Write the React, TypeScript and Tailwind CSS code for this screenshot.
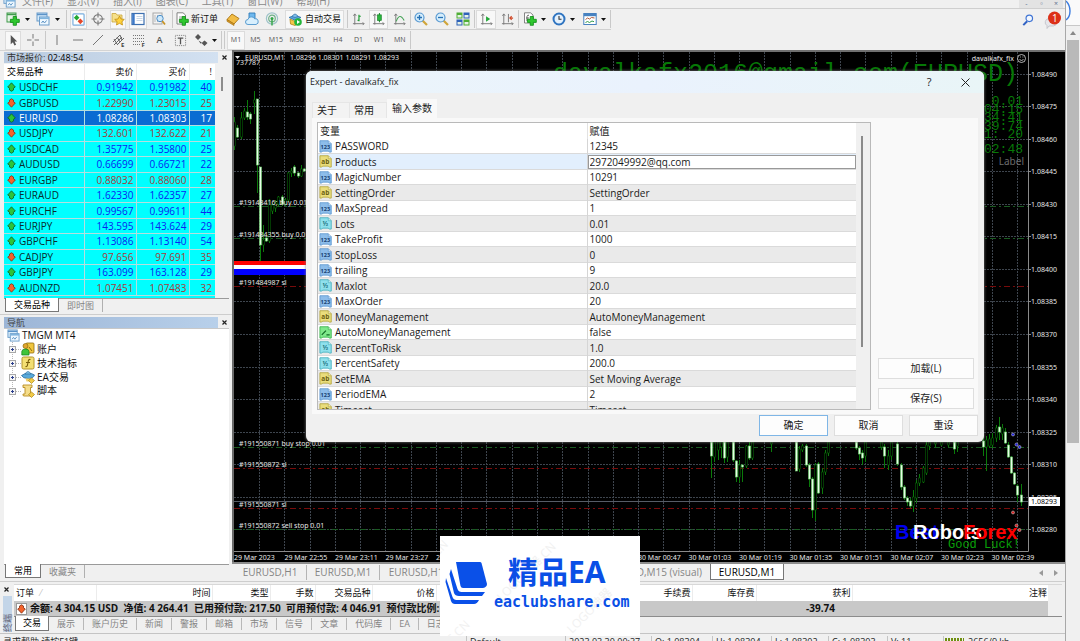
import React, { useState } from 'react';
import clsx from 'clsx';

type Quote = [symbol: string, bid: string, ask: string, spread: number, up: boolean];
type ParamKind = 'int' | 'str' | 'dbl' | 'bool';
type Param = [kind: ParamKind, name: string, value: string];
// x, high, low, body top, body bottom, filled
type Candle = [number, number, number, number, number, 0 | 1];

const MENUS = ['文件(F)', '显示(V)', '插入(I)', '图表(C)', '工具(T)', '窗口(W)', '帮助(H)'];

const QUOTES: Quote[] = [
  ['USDCHF', '0.91942', '0.91982', 40, true],
  ['GBPUSD', '1.22990', '1.23015', 25, false],
  ['EURUSD', '1.08286', '1.08303', 17, true],
  ['USDJPY', '132.601', '132.622', 21, false],
  ['USDCAD', '1.35775', '1.35800', 25, true],
  ['AUDUSD', '0.66699', '0.66721', 22, true],
  ['EURGBP', '0.88032', '0.88060', 28, false],
  ['EURAUD', '1.62330', '1.62357', 27, true],
  ['EURCHF', '0.99567', '0.99611', 44, true],
  ['EURJPY', '143.595', '143.624', 29, true],
  ['GBPCHF', '1.13086', '1.13140', 54, true],
  ['CADJPY', '97.656', '97.691', 35, false],
  ['GBPJPY', '163.099', '163.128', 29, true],
  ['AUDNZD', '1.07451', '1.07483', 32, false],
];

const PARAMS: Param[] = [
  ['int', 'PASSWORD', '12345'],
  ['str', 'Products', '2972049992@qq.com'],
  ['int', 'MagicNumber', '10291'],
  ['str', 'SettingOrder', 'SettingOrder'],
  ['int', 'MaxSpread', '1'],
  ['dbl', 'Lots', '0.01'],
  ['int', 'TakeProfit', '1000'],
  ['int', 'StopLoss', '0'],
  ['int', 'trailing', '9'],
  ['dbl', 'Maxlot', '20.0'],
  ['int', 'MaxOrder', '20'],
  ['str', 'MoneyManagement', 'AutoMoneyManagement'],
  ['bool', 'AutoMoneyManagement', 'false'],
  ['dbl', 'PercentToRisk', '1.0'],
  ['dbl', 'PercentSafety', '200.0'],
  ['str', 'SetEMA', 'Set Moving Average'],
  ['int', 'PeriodEMA', '2'],
  ['str', 'Timeset', 'Timeset'],
];

const CANDLES: Candle[] = [
  [234, 117, 150, 122, 146, 0],
  [237, 125, 138, 128, 137, 1],
  [241, 112, 139, 118, 137, 0],
  [244, 108, 120, 111, 118, 0],
  [247, 100, 120, 112, 117, 1],
  [250, 112, 124, 114, 119, 1],
  [254, 91, 114, 100, 103, 0],
  [257, 99, 193, 99, 165, 1],
  [260, 167, 261, 167, 245, 1],
  [263, 225, 252, 240, 245, 0],
  [266, 236, 242, 238, 241, 1],
  [269, 199, 243, 200, 241, 0],
  [272, 203, 214, 205, 211, 0],
  [275, 200, 212, 203, 208, 0],
  [278, 196, 206, 197, 204, 0],
  [282, 195, 206, 197, 204, 1],
  [285, 198, 206, 200, 204, 0],
  [288, 172, 202, 173, 200, 0],
  [291, 168, 177, 171, 173, 0],
  [294, 165, 176, 167, 173, 1],
  [298, 172, 178, 173, 176, 1],
  [301, 165, 177, 169, 176, 0],
  [304, 168, 172, 169, 171, 1],
  [711, 442, 478, 442, 456, 1],
  [714, 442, 462, 442, 457, 0],
  [718, 442, 460, 442, 450, 0],
  [721, 442, 458, 442, 447, 0],
  [724, 442, 463, 442, 458, 1],
  [727, 442, 462, 442, 457, 0],
  [733, 442, 462, 442, 460, 1],
  [736, 460, 482, 461, 477, 1],
  [739, 460, 483, 465, 477, 0],
  [742, 464, 482, 465, 467, 1],
  [746, 445, 468, 446, 466, 0],
  [749, 442, 460, 446, 458, 1],
  [752, 442, 460, 442, 458, 0],
  [771, 442, 452, 442, 444, 0],
  [796, 442, 471, 442, 471, 1],
  [799, 446, 472, 449, 469, 0],
  [802, 444, 452, 446, 450, 0],
  [806, 444, 467, 446, 465, 1],
  [809, 463, 487, 465, 479, 1],
  [812, 477, 518, 479, 510, 1],
  [815, 463, 521, 465, 510, 0],
  [818, 462, 494, 464, 493, 1],
  [822, 468, 494, 472, 488, 0],
  [825, 450, 475, 453, 472, 0],
  [828, 442, 456, 442, 453, 0],
  [856, 442, 450, 442, 448, 1],
  [859, 446, 460, 448, 454, 1],
  [862, 450, 465, 453, 458, 1],
  [865, 442, 462, 442, 456, 0],
  [881, 442, 450, 442, 447, 0],
  [884, 444, 468, 447, 456, 1],
  [888, 450, 470, 456, 465, 0],
  [891, 442, 460, 442, 456, 0],
  [897, 442, 466, 444, 464, 1],
  [901, 463, 490, 465, 487, 1],
  [904, 485, 500, 487, 498, 1],
  [907, 496, 506, 498, 502, 1],
  [910, 498, 508, 501, 506, 1],
  [913, 490, 512, 497, 506, 0],
  [916, 480, 503, 483, 498, 0],
  [919, 474, 486, 478, 483, 0],
  [923, 466, 483, 468, 482, 0],
  [926, 442, 475, 445, 473, 0],
  [929, 442, 450, 442, 446, 0],
  [935, 442, 447, 442, 444, 0],
  [941, 442, 446, 442, 445, 0],
  [948, 442, 447, 442, 445, 0],
  [954, 442, 454, 442, 449, 1],
  [957, 442, 452, 442, 446, 0],
  [983, 436, 456, 441, 447, 1],
  [986, 436, 471, 440, 447, 0],
  [989, 434, 448, 439, 446, 0],
  [992, 433, 448, 438, 445, 0],
  [996, 425, 442, 428, 438, 0],
  [999, 417, 440, 427, 432, 1],
  [1002, 424, 440, 428, 434, 0],
  [1005, 428, 444, 432, 443, 1],
  [1008, 442, 458, 445, 457, 1],
  [1011, 456, 474, 457, 473, 1],
  [1014, 472, 485, 473, 484, 1],
  [1017, 484, 502, 486, 495, 1],
  [1021, 484, 506, 495, 502, 1],
];

const TIMES = [
  '29 Mar 2023', '29 Mar 22:55', '29 Mar 23:11', '29 Mar 23:27', '29 Mar 23:43', '29 Mar 23:59',
  '30 Mar 00:15', '30 Mar 00:31', '30 Mar 00:47', '30 Mar 01:03', '30 Mar 01:19', '30 Mar 01:35',
  '30 Mar 01:51', '30 Mar 02:07', '30 Mar 02:23', '30 Mar 02:39',
];

const ORDER_LABELS: [string, number][] = [
  ['#19148416; buy 0.01', 205],
  ['#191484355 buy 0.01', 237],
  ['#191484987 sl', 285],
  ['#191550871 buy stop 0.01', 446],
  ['#191550872 sl', 467],
  ['#191550871 sl', 507],
  ['#191550872 sell stop 0.01', 528],
];

/* ---------- small parts ---------- */

const Svg = ({ children, size = 14 }: { children: React.ReactNode; size?: number }) => (
  <svg width={size} height={size} viewBox="0 0 14 14" className="shrink-0" aria-hidden="true">
    {children}
  </svg>
);

function Tool({ label, cls, on, children }: { label: string; cls: string; on?: boolean; children: React.ReactNode }) {
  return (
    <button
      aria-label={label}
      className={clsx('h-[19px] shrink-0 flex items-center justify-center', cls, on && 'bg-[#f8f8f8] border border-[#dcdcdc]')}
    >
      {children}
    </button>
  );
}

const Caret = ({ cls }: { cls: string }) => (
  <button aria-label="更多" className={clsx('shrink-0 flex items-center justify-center', cls)}>
    <svg width="5" height="3" viewBox="0 0 5 3"><path d="M0 0h5L2.5 3z" fill="#111" /></svg>
  </button>
);

const Sep = ({ cls = '' }: { cls?: string }) => <span className={clsx('w-px h-[18px] bg-[#c9c9c9] shrink-0', cls)} />;

const Plus = ({ x = 4, y = 4 }: { x?: number; y?: number }) => (
  <path
    transform={`translate(${x} ${y})`}
    d="M3.2 0.5h3.2v2.8h2.9v3.1H6.4v2.9H3.2V6.4H.4V3.3h2.8z"
    fill="#2fc72f"
    stroke="#0c8a14"
    strokeWidth=".8"
  />
);

const Axes = () => (
  <path d="M3 1v11.500M1 11.500h12M1.500 3L3 1l1.500 2M11.500 10l1.500 1.500-1.500 1.500" fill="none" stroke="#777" strokeWidth="1" />
);

const Windows = ({ size }: { size?: number }) => (
  <Svg size={size}>
    <rect x="1" y="1" width="10" height="8" fill="#d8ecfb" stroke="#6a9cc9" />
    <path d="M1 2.500h10" stroke="#5b93c8" strokeWidth="1.500" />
    <rect x="3.500" y="5" width="9.500" height="8" fill="#eef8ff" stroke="#6a9cc9" />
    <path d="M3.500 6.200h9.500" stroke="#7fb4de" strokeWidth="1.800" />
    <path d="M5.500 11l1.500-2 1.500 2 2-2.500" stroke="#5b92c4" fill="none" />
  </Svg>
);

const Arrow = ({ up }: { up: boolean }) => (
  <svg width="9" height="10" viewBox="0 0 9 10" className="shrink-0" aria-hidden="true">
    {up ? (
      <path d="M4.500.8L8.300 5 6.500 6.200V8l-2 1.200L2.500 8V6.200L.7 5z" fill="#2cc43a" stroke="#0d6b2c" strokeWidth=".9" />
    ) : (
      <path d="M4.500 9.200L8.300 5 6.500 3.800V2l-2-1.200L2.500 2v1.800L.7 5z" fill="#f4642c" stroke="#8c3518" strokeWidth=".9" />
    )}
  </svg>
);

const Close = ({ label, cls = 'w-[12px]' }: { label: string; cls?: string }) => (
  <button aria-label={label} className={clsx('h-[11px] flex items-center justify-center shrink-0', cls)}>
    <svg width="5" height="5" viewBox="0 0 5 5"><path d="M.5.5l4 4M4.500.5l-4 4" stroke="#222" strokeWidth="1.200" /></svg>
  </button>
);

const KIND_STYLE: Record<ParamKind, [string, string, string]> = {
  int: ['#8dbdea', '#5f97d0', '#173f70'],
  str: ['#e9dd7c', '#b5a53c', '#6b5f10'],
  dbl: ['#8fe0ec', '#45aebd', '#1d7482'],
  bool: ['#7fe88a', '#37b24a', '#0f6a24'],
};

function ParamIcon({ kind }: { kind: ParamKind }) {
  const [fill, edge, ink] = KIND_STYLE[kind];
  return (
    <Svg size={13}>
      <path d="M1 .8h9L13.200 4v9H11l-1-1H4l-1 1H1z" fill={fill} stroke={edge} strokeWidth=".9" />
      <path d="M10 .8V4h3.200" fill="#ffffff88" stroke={edge} strokeWidth=".7" />
      {kind === 'bool' ? (
        <path d="M3 9.500L7.500 5M8 9.500h3.500" stroke={ink} strokeWidth="1.300" />
      ) : (
        <text x="6.800" y="9.800" textAnchor="middle" fontSize={kind === 'int' ? 6 : 7} fontWeight="700" fill={ink}>
          {kind === 'int' ? '123' : kind === 'str' ? 'ab' : '½'}
        </text>
      )}
    </Svg>
  );
}

/* ---------- top bars ---------- */

function MenuBar() {
  return (
    <nav className="h-[9px] shrink-0 flex items-end overflow-hidden border-b border-[#cfcfcf] text-[10px] leading-[14px] text-[#8a8a8a]">
      <span className="ml-[3px] mr-[6px] h-[14px] flex items-center"><Windows size={13} /></span>
      <div className="flex items-end gap-[14px]">
        {MENUS.map((m) => (
          <button key={m} className="whitespace-nowrap">{m}</button>
        ))}
      </div>
      <div className="ml-auto mr-[2px] flex h-[8px] bg-[#e3e3e3] text-[7px] leading-[8px] text-[#5c6f8c]">
        <button aria-label="最小化" className="w-[15px]">-</button>
        <button aria-label="还原" className="w-[15px]">▫</button>
        <button aria-label="关闭" className="w-[14px]">×</button>
      </div>
    </nav>
  );
}

function MainToolbar() {
  return (
    <div className="h-[21px] shrink-0 flex">
      <div className="flex items-center pl-[4px] border-b border-[#d0d0d0] text-[9px] text-[#111]">
        <Tool label="新图表" cls="w-[18px]">
          <Svg>
            <rect x="1" y="1" width="9" height="9" fill="#e6f4e6" stroke="#3f9a4a" />
            <path d="M1 2.500h9" stroke="#3f9a4a" strokeWidth="1.500" />
            <Plus />
          </Svg>
        </Tool>
        <Caret cls="w-[10px]" />
        <Tool label="配置文件" cls="w-[22px]"><Windows /></Tool>
        <Caret cls="w-[7px]" />
        <Sep cls="ml-[5px]" />
        <Tool label="市场报价" cls="ml-[3px] w-[17px]" on>
          <Svg size={13}>
            <rect x="1" y="1" width="12" height="12" rx="1" fill="#fff" stroke="#79aede" strokeWidth="1.300" />
            <path d="M5 2L8 5 5 8 2 5z" fill="#22a832" />
            <path d="M9 6l3 3-3 3-3-3z" fill="#e5482a" />
          </Svg>
        </Tool>
        <Tool label="数据窗口" cls="w-[21px]">
          <Svg>
            <circle cx="7" cy="7" r="4.300" fill="none" stroke="#777" strokeWidth="1.100" />
            <path d="M7 .5v5M7 8.500v5M.5 7h5M8.500 7h5" stroke="#777" strokeWidth="1.100" />
          </Svg>
        </Tool>
        <Tool label="导航" cls="ml-[2px] w-[16px]" on>
          <Svg>
            <path d="M1 3V1.500h4L6 3h5v7H1z" fill="#f6e08a" stroke="#c9a53a" strokeWidth=".8" />
            <path d="M8.500 4l1.500 3 3.300.4-2.400 2.200.6 3.400-3-1.700-3 1.700.6-3.400L3.700 7.400 7 7z" fill="#ffd23c" stroke="#c28d10" strokeWidth=".8" />
          </Svg>
        </Tool>
        <Tool label="终端" cls="ml-[3px] w-[18px]" on>
          <Svg>
            <rect x="1" y="1.500" width="12" height="11" fill="#fdfeff" stroke="#3c6fb0" strokeWidth="1.200" />
            <path d="M2.500 2v10" stroke="#3c78c8" strokeWidth="2.400" />
            <path d="M5.500 4.500h6M5.500 6.500h6M5.500 8.500h6" stroke="#c8d6e6" />
          </Svg>
        </Tool>
        <Tool label="策略测试" cls="ml-[2px] w-[20px]">
          <Svg>
            <rect x="1" y="1" width="9" height="11" fill="#f2f2f2" stroke="#a8a8a8" />
            <path d="M3 3v7M5.500 3v7" stroke="#b9b9b9" />
            <circle cx="8" cy="6.500" r="3.200" fill="#cfe9fa" stroke="#4a8dc8" />
            <path d="M10.300 9l2.700 3.500" stroke="#c79325" strokeWidth="1.800" />
          </Svg>
        </Tool>
        <Sep cls="ml-[3px]" />
        <button className="ml-[2px] w-[49px] h-[19px] shrink-0 flex items-center gap-[2px] whitespace-nowrap">
          <Svg>
            <path d="M2 .8h6L10.500 3v9H2z" fill="#fff" stroke="#777" strokeWidth=".9" />
            <path d="M4 5h4M4 7h4" stroke="#999" />
            <Plus x={4} y={4} />
          </Svg>
          新订单
        </button>
        <Tool label="MetaEditor" cls="w-[18px]">
          <Svg>
            <path d="M1 7.500L6 2l7 4.500-5 5.500z" fill="#f2bd46" stroke="#a97412" strokeWidth=".9" />
            <path d="M1 7.500v1.800L8 13.500V12z" fill="#d89a24" stroke="#a97412" strokeWidth=".7" />
          </Svg>
        </Tool>
        <Tool label="市场" cls="w-[20px]">
          <Svg>
            <path d="M4 1h6v6H4z" fill="#6fb8ee" stroke="#2f7ab8" strokeWidth=".9" />
            <path d="M3 12.500a2.500 2.500 0 010-5 3.500 3.500 0 016.500-.8 2.800 2.800 0 011.500 5.800z" fill="#d8effd" stroke="#4d94cc" strokeWidth=".9" />
          </Svg>
        </Tool>
        <Tool label="信号" cls="w-[20px]">
          <Svg>
            <circle cx="7" cy="6.500" r="5.600" fill="none" stroke="#9fc3c9" strokeWidth="1.200" />
            <circle cx="7" cy="6.500" r="3.300" fill="none" stroke="#6fb088" strokeWidth="1.200" />
            <circle cx="7" cy="6.500" r="1.500" fill="#2fa545" />
            <path d="M7 7v6.500" stroke="#2fa545" strokeWidth="1.400" />
          </Svg>
        </Tool>
        <button className="ml-[3px] w-[59px] h-[19px] shrink-0 flex items-center gap-[3px] pl-[2px] bg-[#f8f8f8] border border-[#dcdcdc] whitespace-nowrap">
          <Svg>
            <path d="M1 5.500l6-2.500 6 2.500-6 2.700z" fill="#5ba7dc" stroke="#2f6fa6" strokeWidth=".8" />
            <path d="M4 4.500Q7-.5 10 4.500L7 5.500z" fill="#7fc0ec" stroke="#2f6fa6" strokeWidth=".7" />
            <path d="M2 7l5 2.500L11 7.500v3.500l-4 2.500L2.500 12z" fill="#f3c64a" stroke="#b48716" strokeWidth=".8" />
            <circle cx="10" cy="10" r="3.800" fill="#23b53a" />
            <path d="M9 8v4l3-2z" fill="#fff" />
          </Svg>
          自动交易
        </button>
        <Sep cls="ml-[3px]" />
        <Tool label="柱状图" cls="w-[20px]">
          <Svg size={13}><Axes /><path d="M7.500 2v7M6 8h1.500M7.500 3.500H9.500" stroke="#1d9c33" strokeWidth="1.300" /></Svg>
        </Tool>
        <Tool label="K线图" cls="ml-[1px] w-[19px]" on>
          <Svg size={13}><Axes /><path d="M8 0v10" stroke="#0d7d20" /><rect x="6" y="2" width="4" height="6" fill="#29b53c" stroke="#0d7d20" strokeWidth=".7" /></Svg>
        </Tool>
        <Tool label="折线图" cls="w-[22px]">
          <Svg size={13}><Axes /><path d="M3.500 9Q7-1 12 8" fill="none" stroke="#45a357" strokeWidth="1.200" /></Svg>
        </Tool>
        <Sep />
        {['放大', '缩小'].map((t, i) => (
          <Tool key={t} label={t} cls={i ? 'w-[22px]' : 'w-[20px]'}>
            <Svg>
              <path d="M8.500 8.500L13 13" stroke="#d0a53a" strokeWidth="2.200" />
              <circle cx="5.500" cy="5.500" r="4.500" fill="#d6eefc" stroke="#5a9ad2" strokeWidth="1.200" />
              <path d={i ? 'M3 5.500h5' : 'M3 5.500h5M5.500 3v5'} stroke="#2671b5" strokeWidth="1.300" />
            </Svg>
          </Tool>
        ))}
        <Tool label="平铺窗口" cls="w-[19px]">
          <Svg>
            <path d="M.5.5h6v6h-6zM7.500 7.500h6v6h-6z" fill="#4fae35" />
            <path d="M7.500.5h6v6h-6zM.5 7.500h6v6h-6z" fill="#2f62b8" />
            <path d="M1.500 3h4v2.500h-4zM8.500 3h4v2.500h-4zM1.500 10h4v2.500h-4zM8.500 10h4v2.500h-4z" fill="#e6f2e6" />
          </Svg>
        </Tool>
        <Sep cls="ml-[2px]" />
        <Tool label="自动滚动" cls="ml-[1px] w-[20px]" on>
          <Svg size={13}><Axes /><path d="M6.500 3.500v6l4.500-3z" fill="#23a838" /></Svg>
        </Tool>
        <Tool label="图表平移" cls="w-[22px]">
          <Svg size={13}><Axes /><path d="M8 1v9" stroke="#777" /><path d="M13 5.500H9.500M11.500 3.500l-2 2 2 2" fill="none" stroke="#d04a2a" strokeWidth="1.200" /></Svg>
        </Tool>
        <Sep />
        <Tool label="指标列表" cls="ml-[1px] w-[20px]">
          <Svg>
            <path d="M1.500.8h6L10 3v8H1.500z" fill="#fff" stroke="#777" strokeWidth=".9" />
            <path d="M4 9V4.500Q4 3 6 3.200M3 6h3" fill="none" stroke="#666" />
            <Plus />
          </Svg>
        </Tool>
        <Caret cls="w-[7px]" />
        <Tool label="时段" cls="ml-[2px] w-[20px]">
          <Svg>
            <circle cx="7" cy="7" r="5.500" fill="#e4f1fd" stroke="#2f74c0" strokeWidth="2" />
            <path d="M7 4v3.300h2.500" fill="none" stroke="#333" strokeWidth="1.100" />
          </Svg>
        </Tool>
        <Caret cls="w-[7px]" />
        <Tool label="模板" cls="ml-[4px] w-[20px]">
          <Svg>
            <rect x=".8" y="1.500" width="12.400" height="11" fill="#fff" stroke="#4782c0" />
            <path d="M.8 3h12.400" stroke="#4782c0" strokeWidth="2.400" />
            <path d="M2.500 7.500l2-1.500 2 1 2-1.500 3 .5" fill="none" stroke="#b05a3a" />
            <path d="M2.500 10.500l2-1 2 1 2.500-1.500 2 .7" fill="none" stroke="#2f9a4a" />
          </Svg>
        </Tool>
        <Caret cls="w-[7px]" />
        <Sep cls="ml-[3px]" />
      </div>
      <div className="ml-auto flex items-center gap-[10px] pr-[3px]">
        <button aria-label="搜索">
          <Svg size={12}>
            <path d="M6 8.500L1.500 13" stroke="#3263c4" strokeWidth="2.400" />
            <circle cx="8.500" cy="5" r="3.800" fill="#f1f7ff" stroke="#3f74d4" strokeWidth="1.400" />
          </Svg>
        </button>
        <button aria-label="通知" className="relative w-[18px] h-[18px]">
          <svg width="18" height="18" viewBox="0 0 18 18">
            <path d="M4.500 7.500h5a4 3.800 0 010 7.500H5L3 17.500v-2.900a3.800 3.800 0 011.500-7z" fill="#e6e6ea" stroke="#bcbcc4" strokeWidth=".8" />
            <circle cx="10.500" cy="7" r="6.500" fill="#dc3018" />
          </svg>
          <span className="absolute left-[8px] top-px text-[10px] leading-[12px] text-white">1</span>
        </button>
      </div>
    </div>
  );
}

function LineToolbar() {
  const [tf, setTf] = useState('M1');
  const line = (label: string, cls: string, d: string) => (
    <Tool label={label} cls={cls}><Svg><path d={d} fill="none" stroke="#777" strokeWidth="1" /></Svg></Tool>
  );
  return (
    <div className="h-[20px] shrink-0 flex items-center pl-[5px] text-[7px] text-[#555]">
      <Tool label="光标" cls="w-[16px]" on>
        <Svg size={13}><path d="M4 1v10l2.400-2.200L8 12.500l1.800-.8-1.600-3.500H11z" fill="#555" /></Svg>
      </Tool>
      {line('十字准线', 'w-[24px]', 'M7 1v4.500M7 8.500V13M1 7h4.500M8.500 7H13')}
      <Sep />
      {line('垂直线', 'w-[22px]', 'M7 2v10')}
      {line('水平线', 'w-[20px]', 'M2 7h10')}
      {line('趋势线', 'w-[20px]', 'M2 12L12 2')}
      <Tool label="等距通道" cls="w-[21px]">
        <Svg>
          <path d="M1 9L8 2M2 12l8-8M5 12l7-7M2 6l3 5M5 4l3 5M8 2l2 5" stroke="#666" fill="none" />
          <text x="9" y="14" fontSize="6" fontWeight="700" fill="#444">E</text>
        </Svg>
      </Tool>
      <Tool label="斐波纳契" cls="w-[20px]">
        <Svg>
          <path d="M1 2.500h12M1 5.500h12M1 8.500h12M1 11.500h7" stroke="#777" strokeDasharray="1 1" />
          <text x="9.500" y="14" fontSize="6" fontWeight="700" fill="#444">F</text>
        </Svg>
      </Tool>
      <button className="w-[21px] text-[9px] font-semibold">A</button>
      <Tool label="文字标签" cls="w-[21px]">
        <Svg size={13}>
          <rect x="1.500" y="1.500" width="11" height="11" fill="none" stroke="#777" strokeDasharray="1 1" />
          <path d="M4 4.500h6M7 4.500V11" stroke="#555" strokeWidth="1.400" />
        </Svg>
      </Tool>
      <Tool label="箭头" cls="w-[20px]">
        <Svg><path d="M4 1l3 3-3 3-3-3zM10.500 7.500l3 2.500-3 3-3-3zM4.500 7.500l2 3 2-.5" fill="#555" /></Svg>
      </Tool>
      <Caret cls="w-[6px]" />
      <Sep cls="ml-[4px]" />
      <Sep cls="ml-[2px] mr-[2px]" />
      <button
        onClick={() => setTf('M1')}
        className={clsx('w-[18px] h-[19px]', tf === 'M1' && 'bg-[#f8f8f8] border border-[#dcdcdc]')}
      >
        M1
      </button>
      <div className="flex w-[165px]">
        {['M5', 'M15', 'M30', 'H1', 'H4', 'D1', 'W1', 'MN'].map((t) => (
          <button key={t} onClick={() => setTf(t)} className={clsx('flex-1 h-[19px]', tf === t && 'bg-[#f8f8f8]')}>{t}</button>
        ))}
      </div>
      <Sep />
    </div>
  );
}

/* ---------- left column ---------- */

function PanelTitle({ children, cls }: { children: React.ReactNode; cls: string }) {
  return (
    <div className="flex items-center h-[11px] pl-[4px] pr-[2px]">
      <h2 className={clsx('flex-1 h-[11px] pl-[3px] text-[9px] leading-[11px]', cls)}>{children}</h2>
      <Close label="关闭面板" />
    </div>
  );
}

function PanelTabs({ active, other }: { active: string; other: string }) {
  return (
    <div className="flex items-start ml-[4px] mr-[3px] border-t border-[#9a9a9a] text-[9px] leading-[13px]">
      <button className="-mt-px ml-px px-[8px] bg-white border border-t-0 border-[#777] text-black">{active}</button>
      <button className="px-[8px] text-[#858585] border-r border-[#b0b0b0]">{other}</button>
    </div>
  );
}

function MarketWatch() {
  return (
    <section className="pt-px">
      <PanelTitle cls="bg-linear-to-r from-[#b9cbe0] to-[#d3e1f1] text-[#333]">
        市场报价: <span className="text-black">02:48:54</span>
      </PanelTitle>
      <div className="flex ml-[4px] mt-px h-[234px] overflow-hidden bg-[#f0f0f0]">
        <div className="w-[211px] bg-[#00ffff]">
          <table className="w-full h-[232px] table-fixed border-collapse text-[10px] leading-[14px]">
            <colgroup><col /><col className="w-[52px]" /><col className="w-[53px]" /><col className="w-[26px]" /></colgroup>
            <thead>
              <tr className="h-[16px] bg-white text-[9px]">
                <th className="p-0 pl-[3px] font-normal text-left border-r border-[#ececec]">交易品种</th>
                <th className="p-0 pr-[2px] font-normal text-right border-r border-[#ececec]">卖价</th>
                <th className="p-0 pr-[2px] font-normal text-right border-r border-[#ececec]">买价</th>
                <th className="p-0 pr-[3px] font-normal text-right">!</th>
              </tr>
            </thead>
            <tbody>
              {QUOTES.map(([sym, bid, ask, spread, up]) => {
                const sel = sym === 'EURUSD';
                return (
                  <tr
                    key={sym}
                    className={clsx(
                      'border-b border-[#b5dede] text-right',
                      sel ? 'bg-[#0a6cd2] text-white' : up ? 'text-[#0a24f0]' : 'text-[#a83a3a]',
                    )}
                  >
                    <td className="p-0 pl-[3px] border-r border-[#b5dede]">
                      <span className={clsx('flex items-center gap-[3px]', sel ? 'text-white' : 'text-[#0a2c2c]')}>
                        <Arrow up={up} />
                        {sym}
                      </span>
                    </td>
                    <td className="p-0 pr-[2px] border-r border-[#b5dede]">{bid}</td>
                    <td className="p-0 pr-[2px] border-r border-[#b5dede]">{ask}</td>
                    <td className="p-0 pr-[3px]">{spread}</td>
                  </tr>
                );
              })}
            </tbody>
          </table>
        </div>
        <div className="flex-1 pt-[13px] pl-[6px]"><div className="w-[2px] h-[14px] bg-[#8c8c8c]" /></div>
      </div>
      <PanelTabs active="交易品种" other="即时图" />
    </section>
  );
}

const TREE: [string, React.ReactNode][] = [
  ['账户', (
    <>
      <rect x="5" y="1" width="8" height="10" rx="1" fill="#f0c63e" stroke="#8f6d10" strokeWidth=".8" />
      <circle cx="4.500" cy="4" r="2.500" fill="#e0a52c" stroke="#8f6d10" strokeWidth=".7" />
      <path d="M.8 13V9.500Q1 7 4.500 7T8 9.500V13z" fill="#3fc43a" stroke="#16821a" strokeWidth=".7" />
      <path d="M8 5l3 4" stroke="#8f6d10" />
    </>
  )],
  ['技术指标', (
    <>
      <rect x="1" y="1" width="12" height="12" rx="1.500" fill="#f3df73" stroke="#b3942a" />
      <path d="M9.500 3.500Q7.500 3 7.200 5.500L6.500 9Q6 11 4.500 10.500M5 6.500h4" fill="none" stroke="#7a5f0c" strokeWidth="1.100" />
    </>
  )],
  ['EA交易', (
    <>
      <path d="M.5 5.500Q7 1 13.500 5 12 9 7 8.500 2 8.500.5 5.500z" fill="#58a9da" stroke="#2b6d9e" strokeWidth=".8" />
      <path d="M4 4Q7-1 10 4z" fill="#82c4ea" stroke="#2b6d9e" strokeWidth=".7" />
      <path d="M4.500 8.500h5v3h-4z" fill="#f0cf6a" />
      <path d="M10.500 8L13.500 10.500 10.500 13.500 7.500 10.500z" fill="#f2cb46" stroke="#ab8418" strokeWidth=".7" />
    </>
  )],
  ['脚本', (
    <>
      <path d="M2 1h9v2.500H9.500V9h1v3H3Q1.500 12 2 10h2V3.500H2z" fill="#f5dd8a" stroke="#b98d22" strokeWidth=".9" />
      <path d="M10.500 8L13.500 10.500 10.500 13.500 7.500 10.500z" fill="#f2cb46" stroke="#ab8418" strokeWidth=".7" />
    </>
  )],
];

function Navigator() {
  return (
    <section className="flex-1 flex flex-col mt-[2px] pt-[2px] border-t border-[#cdcdcd]">
      <PanelTitle cls="bg-linear-to-r from-[#9cb5d6] to-[#b8d0ea] text-[#444]">导航</PanelTitle>
      <div className="flex-1 ml-[4px] mr-[3px] bg-white border-t border-[#c8c8c8] text-[10px] text-[#111]">
        <div className="flex items-center gap-[2px] h-[13px] pl-[3px]"><Windows size={13} />TMGM MT4</div>
        <ul className="ml-[4px] text-[10px] leading-[13px]">
          {TREE.map(([name, icon]) => (
            <li key={name} className="flex items-center h-[14px] last:h-[13px]">
              <svg width="13" height="14" viewBox="0 0 13 14" className="shrink-0">
                <path d="M4.500 0v14M8 7.500h5" stroke="#b8b8b8" strokeDasharray="1 1" />
                <rect x="1.500" y="4.500" width="6" height="6" fill="#f6f6f6" stroke="#a8a8a8" />
                <path d="M3 7.500h3M4.500 6v3" stroke="#2c3f8c" />
              </svg>
              <Svg>{icon}</Svg>
              <span className="ml-[2px]">{name}</span>
            </li>
          ))}
        </ul>
      </div>
      <PanelTabs active="常用" other="收藏夹" />
    </section>
  );
}

/* ---------- chart ---------- */

function Chart() {
  const gridX = Array.from({ length: 31 }, (_, i) => Math.round(259 + i * 25.27));
  const gridY = Array.from({ length: 15 }, (_, i) => Math.round(73.5 + i * 32.57));
  return (
    <svg
      viewBox="232 50 833 514"
      preserveAspectRatio="xMinYMin slice"
      className="block w-full flex-1 min-h-0 bg-black [font-family:'Noto_Sans',sans-serif]"
      role="img"
      aria-label="EURUSD,M1"
    >
      <rect x="232" y="50" width="833" height="514" fill="#000" />
      <g stroke="#3e454e" strokeDasharray="2 1">
        {gridX.map((x) => <path key={x} d={`M${x}.5 52V551`} />)}
        {gridY.map((y) => <path key={y} d={`M234 ${y}.5H1028`} />)}
      </g>
      <g strokeDasharray="6 3 2 3" strokeWidth="1">
        <path d="M234 206.500H1028M234 238.500H1028M234 447.500H1028M234 529.500H1028" stroke="#1a5a22" />
        <path d="M234 286.500H1028M234 468.500H1028M234 508.500H1028" stroke="#780b0b" />
      </g>
      <path d="M234 501.500H1028" stroke="#565c66" />
      {CANDLES.map(([x, hi, lo, top, bot, fill]) => (
        <g key={x}>
          <path d={`M${x}.5 ${hi}V${lo}`} stroke="#0a7a0a" />
          <rect
            x={x - 0.5}
            y={top}
            width="2"
            height={Math.max(1, bot - top)}
            fill={fill ? '#e6ffe6' : '#000'}
            stroke={fill ? '#6fcf6f' : '#056005'}
            strokeWidth=".6"
          />
        </g>
      ))}
      <rect x="234" y="261" width="700" height="4" fill="#f00" />
      <rect x="234" y="265" width="700" height="4" fill="#fff" />
      <rect x="234" y="269" width="700" height="6" fill="#00f" />
      <g fill="#e6e6e6" fontSize="7">
        {ORDER_LABELS.map(([t, y]) => <text key={t} x="239" y={y}>{t}</text>)}
        <text x="236" y="65">737787</text>
        <path d="M235 56h5l-2.500 3z" />
        <text x="245" y="60">EURUSD,M1</text>
        <text x="290" y="60">1.08296 1.08301 1.08291 1.08293</text>
        <text x="1014" y="61" textAnchor="end">davalkafx_fix</text>
      </g>
      <g fill="none" stroke="#ddd" strokeWidth=".8">
        <circle cx="1021.500" cy="58.500" r="4" />
        <path d="M1019.500 59.500q2 2 4 0M1020 57h.8M1022.500 57h.8" />
      </g>
      <g fill="#067806" fontFamily="'Liberation Mono', monospace">
        <text x="1018" y="81" fontSize="25" textAnchor="end">davalkafx2016@gmail.com(EURUSD)</text>
        <g fontSize="13" textAnchor="end">
          <text x="1023" y="105">0.01</text>
          <text x="1023" y="113">04:15</text>
          <text x="1023" y="121">34:41</text>
          <text x="1023" y="130">39:74</text>
          <text x="1023" y="138">1: 20</text>
          <text x="1023" y="153">02:48</text>
        </g>
      </g>
      <text x="1024" y="165" fontSize="10" fill="#6c6c6c" textAnchor="end">Label</text>

      <g fontFamily="'Liberation Sans', Arial, sans-serif" fontWeight="700" fontSize="20">
        <text x="895" y="539" fill="#0000f0">Best</text>
        <text x="913" y="539" fill="#fff">Robots</text>
        <text x="963" y="539" fill="#f00">Forex</text>
      </g>
      <text x="948" y="548" fontSize="12" fill="#08a008" fontFamily="'Liberation Mono', monospace">Good Luck!</text>

      <g fill="#2020e0" stroke="#aab" strokeWidth=".7">
        <circle cx="1013" cy="434.500" r="1.500" /><circle cx="1016.500" cy="444.500" r="1.500" /><circle cx="1019.500" cy="447" r="1.500" />
      </g>
      <g fill="#e02020" stroke="#baa" strokeWidth=".7">
        <circle cx="1013" cy="512.500" r="1.500" /><circle cx="1016.500" cy="525.500" r="1.500" /><circle cx="1019.500" cy="530" r="1.500" />
      </g>

      {/* price and time scales */}
      <path d="M1028.500 52V551.500H234" fill="none" stroke="#8a8a8a" />
      <g fill="#e6e6e6" fontSize="7">
        {gridY.map((y, i) => (
          <g key={y}>
            <path d={`M1028 ${y}.5h3`} stroke="#8a8a8a" />
            <text x="1031" y={y + 3}>{(1.0849 - i * 0.00015).toFixed(5)}</text>
          </g>
        ))}
        {TIMES.map((t, i) => <text key={t} x={234 + i * 50.5} y="560">{t}</text>)}
      </g>
      <rect x="1029" y="497" width="31" height="9" fill="#fff" />
      <text x="1031" y="504" fontSize="7" fill="#000">1.08293</text>
      <path d="M232 51h833" stroke="#707070" strokeWidth="2" />
      <path d="M233 50v514" stroke="#6a6a6a" strokeWidth="2" />
      <path d="M232 563h833" stroke="#8c8c8c" strokeWidth="2" />
    </svg>
  );
}

function ChartTabs() {
  return (
    <div className="flex items-center h-[17px] shrink-0 pl-[2px] text-[10px] text-[#858585] whitespace-nowrap overflow-hidden">
      <div className="flex w-[476px] shrink-0 overflow-hidden justify-between">
        <div className="flex">
          {['EURUSD,H1', 'EURUSD,M1', 'EURUSD,H1'].map((t, i) => (
            <button key={i} className="w-[73px] h-[15px] leading-[15px] border-r border-[#b4b4b4]">{t}</button>
          ))}
        </div>
        <button className="mr-[8px] h-[15px] leading-[15px]">EURUSD,M15 (visual)</button>
      </div>
      <button className="self-start w-[74px] h-[16px] leading-[16px] bg-white border border-t-0 border-[#777] text-black">EURUSD,M1</button>
      <div className="ml-auto mr-[7px] flex gap-[11px]">
        <button aria-label="向左"><svg width="4" height="6" viewBox="0 0 4 6"><path d="M4 0v6L0 3z" fill="#999" /></svg></button>
        <button aria-label="向右"><svg width="4" height="6" viewBox="0 0 4 6"><path d="M0 0v6l4-3z" fill="#999" /></svg></button>
      </div>
    </div>
  );
}

/* ---------- terminal ---------- */

const TERM_COLS: [string, string][] = [
  ['时间', 'w-[116px]'], ['类型', 'w-[58px]'], ['手数', 'w-[45px]'], ['交易品种', 'w-[57px]'], ['价格', 'w-[64px]'],
  ['止损', 'w-[64px]'], ['止盈', 'w-[64px]'], ['价格', 'w-[64px]'], ['手续费', 'w-[64px]'], ['库存费', 'w-[64px]'], ['获利', 'w-[96px]'],
];
const TERM_TABS = ['展示', '账户历史', '新闻', '警报', '邮箱', '市场', '信号', '文章', '代码库', 'EA', '日志'];

function Terminal() {
  return (
    <section className="h-[52px] shrink-0 flex border-t border-[#cdcdcd] pt-[2px]">
      <div className="w-[14px] shrink-0 flex flex-col">
        <Close label="关闭终端" cls="w-[13px]" />
        <h2 className="mt-px mb-px ml-[3px] w-[9px] flex-1 bg-[#c3d5e8] text-[9px] leading-[9px] text-[#667] [writing-mode:sideways-lr]">
          终端
        </h2>
      </div>
      <div className="flex-1 min-w-0 mr-[3px]">
        <div className="border-b border-[#8c8c8c] border-t border-t-[#d8d8d8] pr-[14px]">
          <table className="w-full table-fixed border-collapse text-[9px]">
            <colgroup>
              <col className="w-[82px]" />
              {TERM_COLS.map(([, w], i) => <col key={i} className={w} />)}
              <col />
            </colgroup>
            <thead>
              <tr className="h-[16px] bg-white leading-[16px] text-[#111]">
                <th className="p-0 pl-[2px] text-left font-normal border-r border-[#ececec]">订单 <span className="ml-[4px] text-[#bbb]">⁄</span></th>
                {TERM_COLS.map(([c], i) => (
                  <th key={i} className="p-0 pr-px text-right font-normal border-r border-[#ececec]">{c}</th>
                ))}
                <th className="p-0 pr-px text-right font-normal">注释</th>
              </tr>
            </thead>
            <tbody>
              <tr className="h-[15px] bg-[#c8c8c8] leading-[15px] text-[10px] font-bold text-[#111]">
                <td colSpan={11} className="p-0 pl-[2px]">
                  <span className="flex items-center whitespace-pre">
                    <span className="mr-[3px] bg-white border border-[#999]"><Arrow up={false} /></span>
                    余额: 4 304.15 USD{'  '}净值: 4 264.41{'  '}已用预付款: 217.50{'  '}可用预付款: 4 046.91{'  '}预付款比例: 1960.69%
                  </span>
                </td>
                <td className="p-0 pr-[17px] text-right">-39.74</td>
                <td />
              </tr>
            </tbody>
          </table>
        </div>
        <div className="flex items-start pl-px text-[9px] text-[#858585] whitespace-nowrap">
          <button className="-mt-px px-[7px] h-[15px] bg-white border border-t-0 border-[#777] text-black">交易</button>
          {TERM_TABS.map((t) => (
            <button key={t} className="mt-px px-[8px] h-[12px] leading-[12px] border-r border-[#b8b8b8]">{t}</button>
          ))}
        </div>
      </div>
    </section>
  );
}

function StatusBar() {
  const cells: [string, string][] = [
    ['Default', 'w-[99px]'], ['2023.03.30 00:37', 'w-[86px]'], ['O: 1.08304', 'w-[61px]'], ['H: 1.08304', 'w-[59px]'],
    ['L: 1.08302', 'w-[57px]'], ['C: 1.08303', 'w-[59px]'], ['V: 11', 'w-[56px]'],
  ];
  return (
    <footer className="h-[8px] shrink-0 flex overflow-hidden border-t border-[#c4c4c4] pt-[2px] text-[9px] leading-[12px] text-[#222] whitespace-nowrap">
      <span className="w-[466px] pl-[3px] shrink-0">寻求帮助,请按F1键</span>
      {cells.map(([t, w]) => (
        <span key={t} className={clsx('shrink-0 border-l border-[#c4c4c4] pl-[3px]', w)}>{t}</span>
      ))}
      <span className="border-l border-[#c4c4c4] pl-px flex gap-[4px]">
        <svg width="19" height="10" viewBox="0 0 19 10" className="mt-[2px]">
          <path d="M0 5h19" stroke="#6f8f10" strokeWidth="10" strokeDasharray="2 1" />
        </svg>
        2656/9 kb
      </span>
    </footer>
  );
}

/* ---------- expert dialog ---------- */

const DialogButton = ({ children, primary, cls }: { children: string; primary?: boolean; cls: string }) => (
  <button className={clsx('h-[21px] bg-[#fdfdfd] border text-[10px] text-[#1a1a1a]', primary ? 'border-[#7fb6e6]' : 'border-[#dedede]', cls)}>
    {children}
  </button>
);

function ExpertDialog() {
  const [product, setProduct] = useState('2972049992@qq.com');
  return (
    <div
      role="dialog"
      aria-labelledby="expert-title"
      className="absolute left-[306px] top-[71px] right-[96px] rounded-[6px] bg-[#f0f0f0] overflow-hidden shadow-[0_0_3px_#888]"
    >
      <header className="flex items-center h-[22px] pl-[4px] pr-[12px] bg-linear-to-r from-[#ebf5fa] via-[#eaf2fd] to-[#e9f5f7]">
        <h1 id="expert-title" className="flex-1 text-[9px] text-[#222]">Expert - davalkafx_fix</h1>
        <button aria-label="帮助" className="w-[14px] mr-[22px] text-[11px] text-[#222]">?</button>
        <button aria-label="关闭" className="w-[14px] flex justify-center">
          <svg width="9" height="9" viewBox="0 0 9 9"><path d="M.5.5l8 8M8.500.5l-8 8" stroke="#222" strokeWidth="1" /></svg>
        </button>
      </header>

      <div role="tablist" className="flex items-end h-[25px] pl-[6px] text-[10px] leading-[15px] text-[#222]">
        <button role="tab" className="w-[38px] h-[16px] pl-[4px] text-left bg-[#f3f3f3] border border-b-0 border-[#e6e6e6]">关于</button>
        <button role="tab" className="w-[37px] h-[16px] pl-[4px] text-left bg-[#f3f3f3] border border-b-0 border-l-0 border-[#e6e6e6]">常用</button>
        <button role="tab" aria-selected="true" className="w-[50px] h-[19px] bg-[#f9f9f9]">输入参数</button>
      </div>

      <div className="mx-[6px] flex gap-[7px] pl-[5px] pr-[4px] pt-[4px] pb-[4px] bg-[#f9f9f9]">
        <div className="flex-1 flex h-[288px] overflow-hidden bg-white border border-[#b9b9b9]">
          <table className="flex-1 h-[294px] table-fixed border-collapse text-[10px] leading-[14px] text-[#1a1a1a]">
            <colgroup><col className="w-1/2" /><col className="w-1/2" /></colgroup>
            <thead>
              <tr className="h-[16px]">
                <th className="p-0 pl-[2px] text-left font-normal border-r border-[#e2e2e2]">变量</th>
                <th className="p-0 pl-[2px] text-left font-normal">赋值</th>
              </tr>
            </thead>
            <tbody>
              {PARAMS.map(([kind, name, value], i) => (
                <tr key={name} className={clsx(i > 0 && 'border-t border-[#dadada]', i === 1 ? 'bg-[#e2effd]' : i % 2 ? 'bg-[#eaeaea]' : 'bg-white')}>
                  <td className="p-0 pl-px border-r border-[#d5d5d5]">
                    <span className="flex items-center gap-[3px]"><ParamIcon kind={kind} />{name}</span>
                  </td>
                  {i === 1 ? (
                    <td className="p-0">
                      <input
                        aria-label={name}
                        value={product}
                        onChange={(e) => setProduct(e.target.value)}
                        className="block w-full h-[14px] px-px bg-white border border-[#999] leading-[12px] outline-none"
                      />
                    </td>
                  ) : (
                    <td className="p-0 pl-[2px]">{value}</td>
                  )}
                </tr>
              ))}
            </tbody>
          </table>
          <div className="w-[14px] shrink-0 pt-[13px] pl-[5px] bg-[#f0f0f0]">
            <div className="w-[2px] h-[211px] bg-[#8a8a8a]" />
          </div>
        </div>
        <div className="w-[96px] flex flex-col justify-end gap-[9px] pb-px">
          <DialogButton cls="w-full">加载(L)</DialogButton>
          <DialogButton cls="w-full">保存(S)</DialogButton>
        </div>
      </div>

      <footer className="flex justify-end gap-[6px] pt-px pb-[6px] pr-[6px]">
        <DialogButton primary cls="w-[69px]">确定</DialogButton>
        <DialogButton cls="w-[69px]">取消</DialogButton>
        <DialogButton cls="w-[69px]">重设</DialogButton>
      </footer>
    </div>
  );
}

function Stamp() {
  return (
    <div className="absolute left-[440px] bottom-[5px] w-[200px] h-[100px] overflow-hidden bg-white text-[#0a4fe6]">
      <svg width="200" height="100" viewBox="0 0 200 100" className="absolute inset-0" aria-hidden="true">
        <g fill="#f1f1f1" fontSize="12">
          <text transform="translate(-22 40) rotate(-45)">神器.CN</text>
          <text transform="translate(62 66) rotate(-45)">LOGO神器.CN</text>
          <text transform="translate(-2 122) rotate(-45)">器YC.CN</text>
          <text transform="translate(132 98) rotate(-45)">LOGO神器</text>
        </g>
      </svg>
      <div className="relative flex items-center h-full pl-[5px]">
        <svg width="43" height="44" viewBox="0 0 43 44" className="shrink-0 mt-[-7px]" aria-hidden="true">
          <path d="M11 1h24q1 0 1.500 1L42 23q0 3-4 4H18q-2 0-2.500-2z" fill="#0a50e8" />
          <path d="M6 8l6.500 20q1 3 4 3H40l-3 4H14q-4 0-5-3L4.500 13z" fill="#0a50e8" />
          <path d="M1 17l6.500 19q1 3 4 3H34q-2 4-5 4H10q-3 0-4-3L.5 21z" fill="#0a50e8" />
        </svg>
        <div className="ml-[6px] mt-[-4px]">
          <p className="ml-[14px] text-[30px] leading-[36px] font-bold [font-family:'Noto_Sans','Noto_Sans_CJK_SC',sans-serif]">精品EA</p>
          <p className="text-[15px] leading-[24px] font-bold [font-family:'DejaVu_Sans_Mono',monospace]">eaclubshare.com</p>
        </div>
      </div>
    </div>
  );
}

export default function App() {
  return (
    <div className="relative flex h-screen overflow-hidden bg-[#f0f0f0] [font-family:'Open_Sans','Noto_Sans_CJK_SC',sans-serif]">
      <main className="flex-1 min-w-0 flex flex-col bg-[#f0f0f0]">
        <MenuBar />
        <MainToolbar />
        <LineToolbar />
        <div className="flex-1 min-h-0 flex">
          <aside className="w-[232px] shrink-0 flex flex-col border-t border-[#d4d4d4] pb-[3px]">
            <MarketWatch />
            <Navigator />
          </aside>
          <div className="flex-1 min-w-0 flex flex-col">
            <Chart />
            <ChartTabs />
          </div>
        </div>
        <Terminal />
        <StatusBar />
      </main>

      {/* browser edge behind the terminal window */}
      <div className="w-[15px] shrink-0 flex flex-col border-l border-[#a8a8a8]">
        <div className="h-[26px] border-b border-[#c8c8c8] bg-[#fafafa] overflow-hidden">
          <svg width="6" height="22" viewBox="0 0 6 22"><path d="M0 1q4 4 4 10t-4 9" fill="none" stroke="#3a7be0" strokeWidth="1.400" /></svg>
        </div>
        <div className="h-[14px] flex items-center justify-center">
          <svg width="6" height="4" viewBox="0 0 6 4"><path d="M3 0l3 4H0z" fill="#888" /></svg>
        </div>
        <div className="mx-px h-[403px] bg-[#b9b9b9]" />
      </div>

      <ExpertDialog />
      <Stamp />
    </div>
  );
}
